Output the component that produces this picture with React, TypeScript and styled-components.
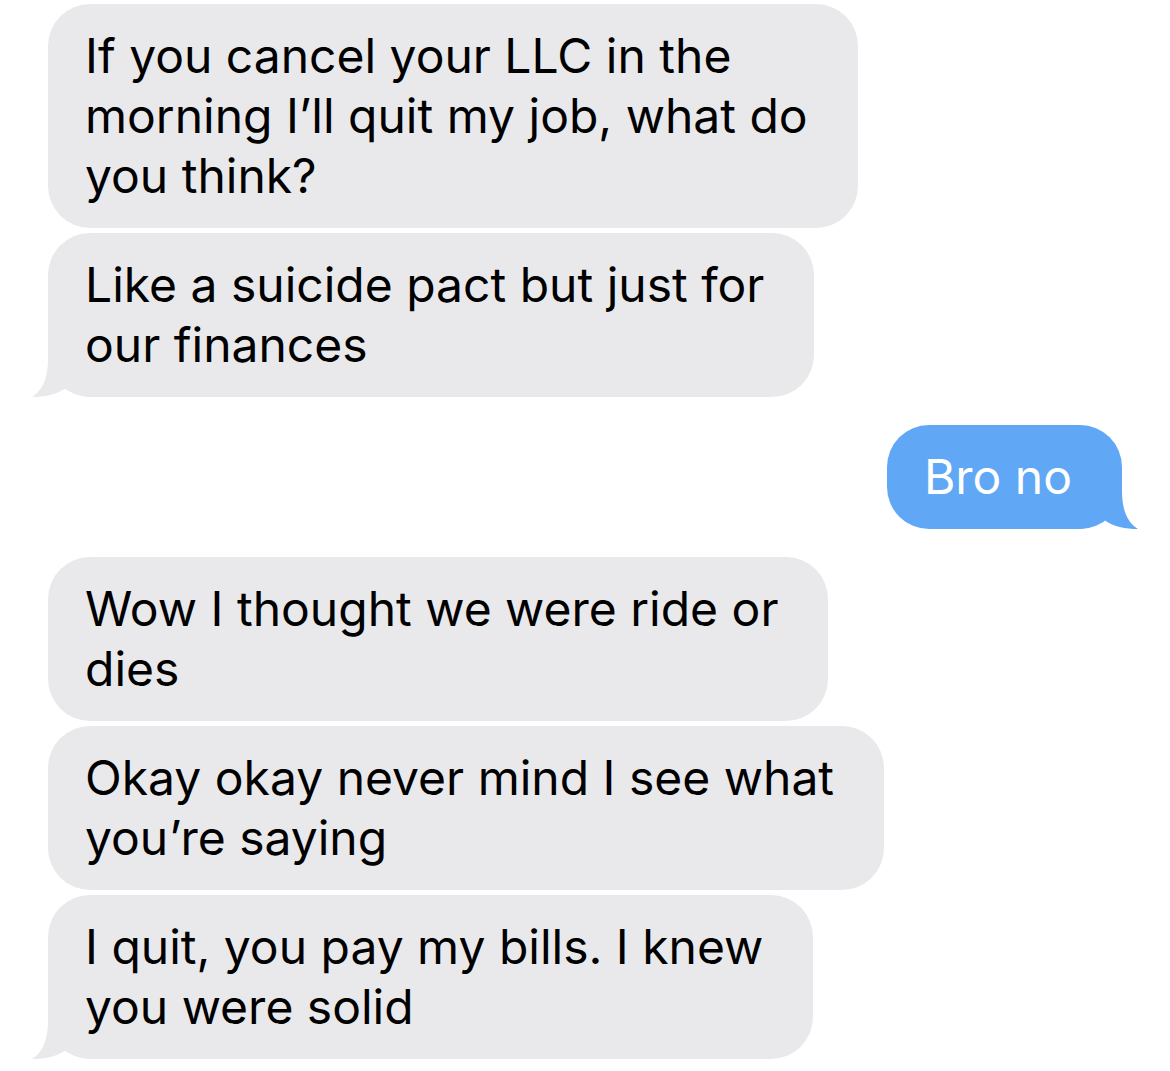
import styled, { createGlobalStyle } from 'styled-components';

const GlobalStyle = createGlobalStyle`
    html, body {
        margin: 0;
        padding: 0;
        background: #ffffff;
    }
`;

const Thread = styled.div`
    display: flex;
    flex-direction: column;
    padding: 4px 48px 0 48px;
    font-family: Inter, "Liberation Sans", Arial, sans-serif;
    -webkit-font-smoothing: antialiased;
`;

const Group = styled.div<{ fromMe?: boolean }>`
    display: flex;
    flex-direction: column;
    align-items: ${(p) => (p.fromMe ? 'flex-end' : 'flex-start')};
    gap: 5px;
    margin-bottom: 28px;
`;

const Bubble = styled.div<{ fromMe?: boolean }>`
    position: relative;
    box-sizing: border-box;
    padding: 22px 50px 22px 37px;
    border-radius: 42px;
    background: ${(p) => (p.fromMe ? '#60a8f5' : '#e9e9eb')};
    color: ${(p) => (p.fromMe ? '#ffffff' : '#000000')};
    font-size: 48px;
    line-height: 60px;
    white-space: pre-line;
`;

const Text = styled.span`
    position: relative;
    z-index: 1;
`;

const Tail = styled.svg<{ fromMe?: boolean }>`
    position: absolute;
    bottom: 0;
    z-index: 0;
    width: 61px;
    height: 44px;
    ${(p) => (p.fromMe ? 'right: -16px; transform: scaleX(-1);' : 'left: -16px;')}
`;

function BubbleTail({ fromMe }: { fromMe?: boolean }) {
    return (
        <Tail fromMe={fromMe} viewBox="0 0 61 44">
            <path
                d="M16 0 L16 6 C16 26 10 38 0 44 C12 44 25 42 35 34 C42 40 50 44 61 44 L61 0 Z"
                fill={fromMe ? '#60a8f5' : '#e9e9eb'}
            />
        </Tail>
    );
}

type Msg = { text: string };
type Block = { fromMe?: boolean; messages: Msg[] };

const thread: Block[] = [
    {
        messages: [
            { text: 'If you cancel your LLC in the\nmorning I\u2019ll quit my job, what do\nyou think?' },
            { text: 'Like a suicide pact but just for\nour finances' },
        ],
    },
    { fromMe: true, messages: [{ text: 'Bro no' }] },
    {
        messages: [
            { text: 'Wow I thought we were ride or\ndies' },
            { text: 'Okay okay never mind I see what\nyou\u2019re saying' },
            { text: 'I quit, you pay my bills. I knew\nyou were solid' },
        ],
    },
];

export default function App() {
    return (
        <>
            <GlobalStyle />
            <Thread>
                {thread.map((block, i) => (
                    <Group key={i} fromMe={block.fromMe}>
                        {block.messages.map((m, j) => (
                            <Bubble key={j} fromMe={block.fromMe}>
                                {j === block.messages.length - 1 && <BubbleTail fromMe={block.fromMe} />}
                                <Text>{m.text}</Text>
                            </Bubble>
                        ))}
                    </Group>
                ))}
            </Thread>
        </>
    );
}
